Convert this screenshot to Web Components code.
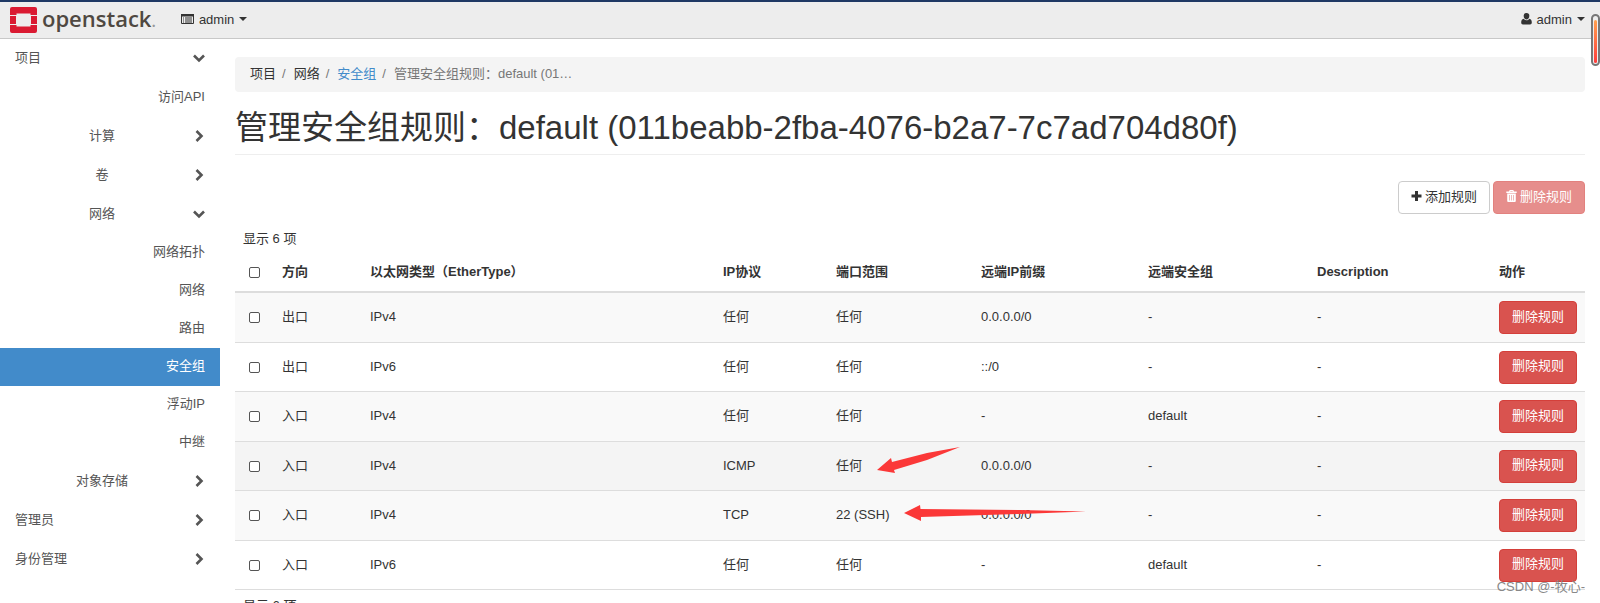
<!DOCTYPE html>
<html lang="zh-CN">
<head>
<meta charset="utf-8">
<title>管理安全组规则 - OpenStack Dashboard</title>
<style>
  html { scrollbar-width: none; }
  body {
    margin: 0;
    background: #fff;
    color: #333;
    font: 13px/19px "Liberation Sans", "Noto Sans CJK SC", sans-serif;
  }
</style>
</head>
<body>
<dashboard-app></dashboard-app>

<script>
const define = (name, html, setup) => {
  const template = document.createElement("template");
  template.innerHTML = html;
  customElements.define(name, class extends HTMLElement {
    connectedCallback() {
      if (this.shadowRoot) return;
      this.attachShadow({ mode: "open" }).append(template.content.cloneNode(true));
      if (setup) setup(this, this.shadowRoot);
    }
  });
};

/* Icons */
const icons = {
  down: ["0 0 12 12", '<path d="M1 3.5 6 8.5 11 3.5" fill="none" stroke="currentColor" stroke-width="2.6"/>'],
  right: ["0 0 12 12", '<path d="M3.5 1 8.5 6 3.5 11" fill="none" stroke="currentColor" stroke-width="2.6"/>'],
  caret: ["0 0 8 12", '<path d="M0 4h8L4 8z" fill="currentColor"/>'],
  list: ["0 0 13 12", '<path d="M.5 1.500h12v9H.5z" fill="none" stroke="currentColor"/><path d="M0 1h13v2.500H0zM2 4.500h1v1H2zm2 0h7v1H4zM2 6.500h1v1H2zm2 0h7v1H4zM2 8.500h1v1H2zm2 0h7v1H4z" fill="currentColor"/>'],
  user: ["0 0 11 12", '<path d="M5.500 0a2.800 2.800 0 0 1 2.800 3C8.300 5 7 6.500 5.500 6.500S2.700 5 2.700 3A2.800 2.800 0 0 1 5.500 0zM2.700 5.800c.8 1 1.700 1.500 2.800 1.500s2-.5 2.800-1.500C10.200 6 10.800 7.800 10.800 9.600c0 1.200-.7 1.900-1.700 1.900H1.900C.9 11.500.2 10.800.2 9.600.2 7.800.8 6 2.700 5.800z" fill="currentColor"/>'],
  plus: ["0 0 11 12", '<path d="M4 1h3v3.500h3.500v3H7V11H4V7.500H.5v-3H4z" fill="currentColor"/>'],
  trash: ["0 0 11 12", '<path fill-rule="evenodd" d="M3.700 0h3.600l.7 1.500h2.700V3H.3V1.500H3zM4.500.9l-.3.6h2.600l-.3-.6zM1.200 3.500h8.600V11q0 1-1 1H2.200q-1 0-1-1zM3.200 5v5.500h.6V5zm2 0v5.500h.6V5zm2 0v5.500h.6V5z" fill="currentColor"/>']
};
define("ui-icon", `
<style>
  :host { display: inline-flex; flex: none; }
  svg { display: block; height: 12px; }
</style>
<svg aria-hidden="true"></svg>`, (el, root) => {
  const [box, shape] = icons[el.getAttribute("name")];
  const svg = root.querySelector("svg");
  svg.setAttribute("viewBox", box);
  svg.style.width = box.split(" ")[2] + "px";
  svg.innerHTML = shape;
});

/* Buttons: default, danger, disabled */
define("ui-button", `
<style>
  :host { display: inline-block; }
  button {
    display: flex; align-items: center; gap: 3px;
    box-sizing: border-box; height: 33px; margin: 0; padding: 0 12px 3px;
    border: 1px solid #ccc; border-radius: 4px;
    background: #fff; color: #333; font: inherit; white-space: nowrap;
  }
  :host([danger]) button { background: #d9534f; border-color: #d43f3a; color: #fff; }
  button:disabled { opacity: .65; }
</style>
<button type="button"><slot></slot></button>`, (el, root) => {
  root.querySelector("button").disabled = el.hasAttribute("disabled");
});

/* Top bar */
define("brand-logo", `
<style>
  :host { display: block; }
  a { display: flex; align-items: center; gap: 5px; color: #4f4841; text-decoration: none; }
  svg { display: block; width: 27px; height: 26px; }
  .word { font: 600 22px/26px "Open Sans", "Noto Sans", sans-serif; padding-bottom: 2px; }
  .dot { color: #999; font-size: 16px; }
</style>
<a href="#" aria-label="openstack">
  <svg viewBox="0 0 27 26" aria-hidden="true" fill="#da1a32">
    <path d="M2 0h23q2 0 2 2v6h-6.500V6.500h-14V8H0V2q0-2 2-2z"/>
    <path d="M0 9h6v8H0zM21 9h6v8h-6z"/>
    <path d="M0 18h6.500v1.500h14V18H27v6q0 2-2 2H2q-2 0-2-2z"/>
  </svg>
  <span class="word">openstack<span class="dot">.</span></span>
</a>`);
define("top-bar", `
<style>
  :host {
    display: flex; align-items: center; box-sizing: border-box; height: 39px;
    padding: 0 15px 0 10px; background: #ededed;
    border-top: 2px solid #1f3864; border-bottom: 1px solid #c8c8c8;
  }
  .menu {
    display: flex; align-items: center; gap: 5px; padding: 0 0 2px;
    border: 0; background: none; color: #333; font: inherit;
  }
  .project { margin-left: 25px; }
  .user { margin-left: auto; }
</style>
<brand-logo></brand-logo>
<button class="menu project" type="button"><ui-icon name="list"></ui-icon>admin<ui-icon name="caret"></ui-icon></button>
<button class="menu user" type="button"><ui-icon name="user"></ui-icon>admin<ui-icon name="caret"></ui-icon></button>`);

/* Sidebar */
define("nav-group", `
<style>
  :host { display: block; }
  button {
    display: flex; align-items: center; width: 100%; height: 39px;
    padding: 0 15px 2px; border: 0; background: none; color: #555; font: inherit; text-align: left;
  }
  span { flex: 1; }
  :host([nested]) span { text-align: center; }
  :host([open]:not([nested])) .items { padding-top: 1px; }
  ui-icon { width: 16px; justify-content: flex-end; }
</style>
<button type="button"><span></span></button>
<div class="items"><slot></slot></div>`, (el, root) => {
  root.querySelector("span").textContent = el.getAttribute("label");
  const icon = document.createElement("ui-icon");
  icon.setAttribute("name", el.hasAttribute("open") ? "down" : "right");
  const button = root.querySelector("button");
  button.setAttribute("aria-expanded", el.hasAttribute("open"));
  button.append(icon);
});
define("nav-link", `
<style>
  :host { display: block; }
  a {
    display: block; box-sizing: border-box; height: 38px; padding: 8px 15px 11px;
    color: #555; text-align: right; text-decoration: none;
  }
  :host([active]) a { background: #428bca; color: #fff; }
</style>
<a href="#"><slot></slot></a>`);
define("side-nav", `
<style>:host { display: block; }</style>
<nav>
  <nav-group label="项目" open>
    <nav-link>访问API</nav-link>
    <nav-group nested label="计算"></nav-group>
    <nav-group nested label="卷"></nav-group>
    <nav-group nested label="网络" open>
      <nav-link>网络拓扑</nav-link>
      <nav-link>网络</nav-link>
      <nav-link>路由</nav-link>
      <nav-link active>安全组</nav-link>
      <nav-link>浮动IP</nav-link>
      <nav-link>中继</nav-link>
    </nav-group>
    <nav-group nested label="对象存储"></nav-group>
  </nav-group>
  <nav-group label="管理员"></nav-group>
  <nav-group label="身份管理"></nav-group>
</nav>`);

/* Breadcrumb and title */
define("crumb-trail", `
<style>
  :host { display: block; }
  ol {
    display: flex; margin: 0; padding: 7px 15px 9px; list-style: none;
    background: #f4f4f4; border-radius: 4px; color: #777;
  }
  li + li::before { content: "/"; padding: 0 8px 0 6px; }
  a { color: #333; text-decoration: none; }
  a.link { color: #428bca; }
</style>
<ol>
  <li><a href="#">项目</a></li>
  <li><a href="#">网络</a></li>
  <li><a href="#" class="link">安全组</a></li>
  <li>管理安全组规则：default (01…</li>
</ol>`);
define("page-title", `
<style>
  :host { display: block; border-bottom: 1px solid #eee; }
  h1 { margin: 0; padding: 17px 0 8px; font-weight: 400; font-size: 33px; line-height: 37px; }
</style>
<h1><slot></slot></h1>`);

/* Rules table */
const rules = [
  ["出口", "IPv4", "任何", "任何", "0.0.0.0/0", "-", "-"],
  ["出口", "IPv6", "任何", "任何", "::/0", "-", "-"],
  ["入口", "IPv4", "任何", "任何", "-", "default", "-"],
  ["入口", "IPv4", "ICMP", "任何", "0.0.0.0/0", "-", "-"],
  ["入口", "IPv4", "TCP", "22 (SSH)", "0.0.0.0/0", "-", "-"],
  ["入口", "IPv6", "任何", "任何", "-", "default", "-"]
];
define("rules-table", `
<style>
  :host { display: block; position: relative; }
  .count { padding: 0 8px; line-height: 19px; }
  .foot { padding-top: 6px; }
  table { width: 100%; border-collapse: separate; border-spacing: 0; table-layout: fixed; }
  th, td { box-sizing: border-box; padding: 0 8px 2px; text-align: left; vertical-align: middle; }
  th { height: 45px; padding: 5px 8px 1px; border-bottom: 2px solid #ddd; }
  td { height: 50px; border-bottom: 1px solid #ddd; }
  td:last-child { padding-bottom: 0; }
  tbody tr:nth-child(odd) { background: #f9f9f9; }
  tbody tr:nth-child(even) td { height: 49px; }
  tbody tr.current { background: #f4f4f4; }
  .pick { width: 39px; padding-left: 14px; padding-right: 0; }
  .dir { width: 88px; } .proto { width: 113px; } .port { width: 145px; } .prefix { width: 167px; }
  .group { width: 169px; } .desc { width: 182px; } .act { width: 94px; }
  input {
    appearance: none; display: block; box-sizing: border-box; width: 11px; height: 11px; margin: 2px 0 0;
    border: 1px solid #555; border-radius: 2px; background: #fff;
  }
  ui-button { display: block; }
  .arrows { position: absolute; left: 642px; top: 218px; width: 210px; height: 80px; pointer-events: none; }
</style>
<div class="count">显示 6 项</div>
<table>
  <thead><tr>
    <th class="pick"><input type="checkbox" aria-label="全选"></th>
    <th class="dir">方向</th><th>以太网类型（EtherType）</th><th class="proto">IP协议</th>
    <th class="port">端口范围</th><th class="prefix">远端IP前缀</th><th class="group">远端安全组</th>
    <th class="desc">Description</th><th class="act">动作</th>
  </tr></thead>
  <tbody></tbody>
</table>
<div class="count foot">显示 6 项</div>
<svg class="arrows" viewBox="877 447 210 80" aria-hidden="true" fill="#fb3838">
  <path d="M877 470 891 458 892 462 927 453 960 447 927 460 894 470 895 473z"/>
  <path d="M904 513 920 505 920.500 509 1020 510 1086 511.500 1020 514 921 517 921 521z"/>
</svg>`, (el, root) => {
  const body = root.querySelector("tbody");
  rules.forEach((rule, i) => {
    const row = body.insertRow();
    if (i === 3) row.className = "current";
    const pick = row.insertCell();
    pick.className = "pick";
    pick.innerHTML = `<input type="checkbox" aria-label="选择规则 ${i + 1}">`;
    rule.forEach(text => { row.insertCell().textContent = text; });
    row.insertCell().innerHTML = "<ui-button danger>删除规则</ui-button>";
  });
});

/* Floating scroll marker at the window's right edge */
define("scroll-marker", `
<style>
  :host {
    position: absolute; right: 0; top: 14px; box-sizing: border-box; width: 9px; height: 52px;
    border: 2px solid #777; border-radius: 5px; background: #eee; padding: 4px 1px 1px;
  }
  div { height: 100%; border-radius: 2px; background: linear-gradient(#ffa04d, #ff3d3d); }
</style>
<div></div>`);
define("water-mark", `
<style>
  :host { position: absolute; right: 15px; top: 577px; color: #888; font-size: 13px; line-height: 20px; white-space: nowrap; }
</style>
<slot></slot>`);

define("dashboard-app", `
<style>
  :host { display: block; position: relative; height: 100vh; overflow: hidden; }
  .page { display: grid; grid-template-columns: 220px minmax(0, 1fr); }
  main { padding: 18px 15px 0; }
  .actions { display: flex; justify-content: flex-end; gap: 3px; padding: 26px 0 15px; }
</style>
<top-bar></top-bar>
<div class="page">
  <side-nav></side-nav>
  <main>
    <crumb-trail></crumb-trail>
    <page-title>管理安全组规则：default (011beabb-2fba-4076-b2a7-7c7ad704d80f)</page-title>
    <div class="actions">
      <ui-button><ui-icon name="plus"></ui-icon>添加规则</ui-button>
      <ui-button danger disabled><ui-icon name="trash"></ui-icon>删除规则</ui-button>
    </div>
    <rules-table></rules-table>
  </main>
</div>
<scroll-marker></scroll-marker>
<water-mark>CSDN @-牧心-</water-mark>`);
</script>
</body>
</html>
